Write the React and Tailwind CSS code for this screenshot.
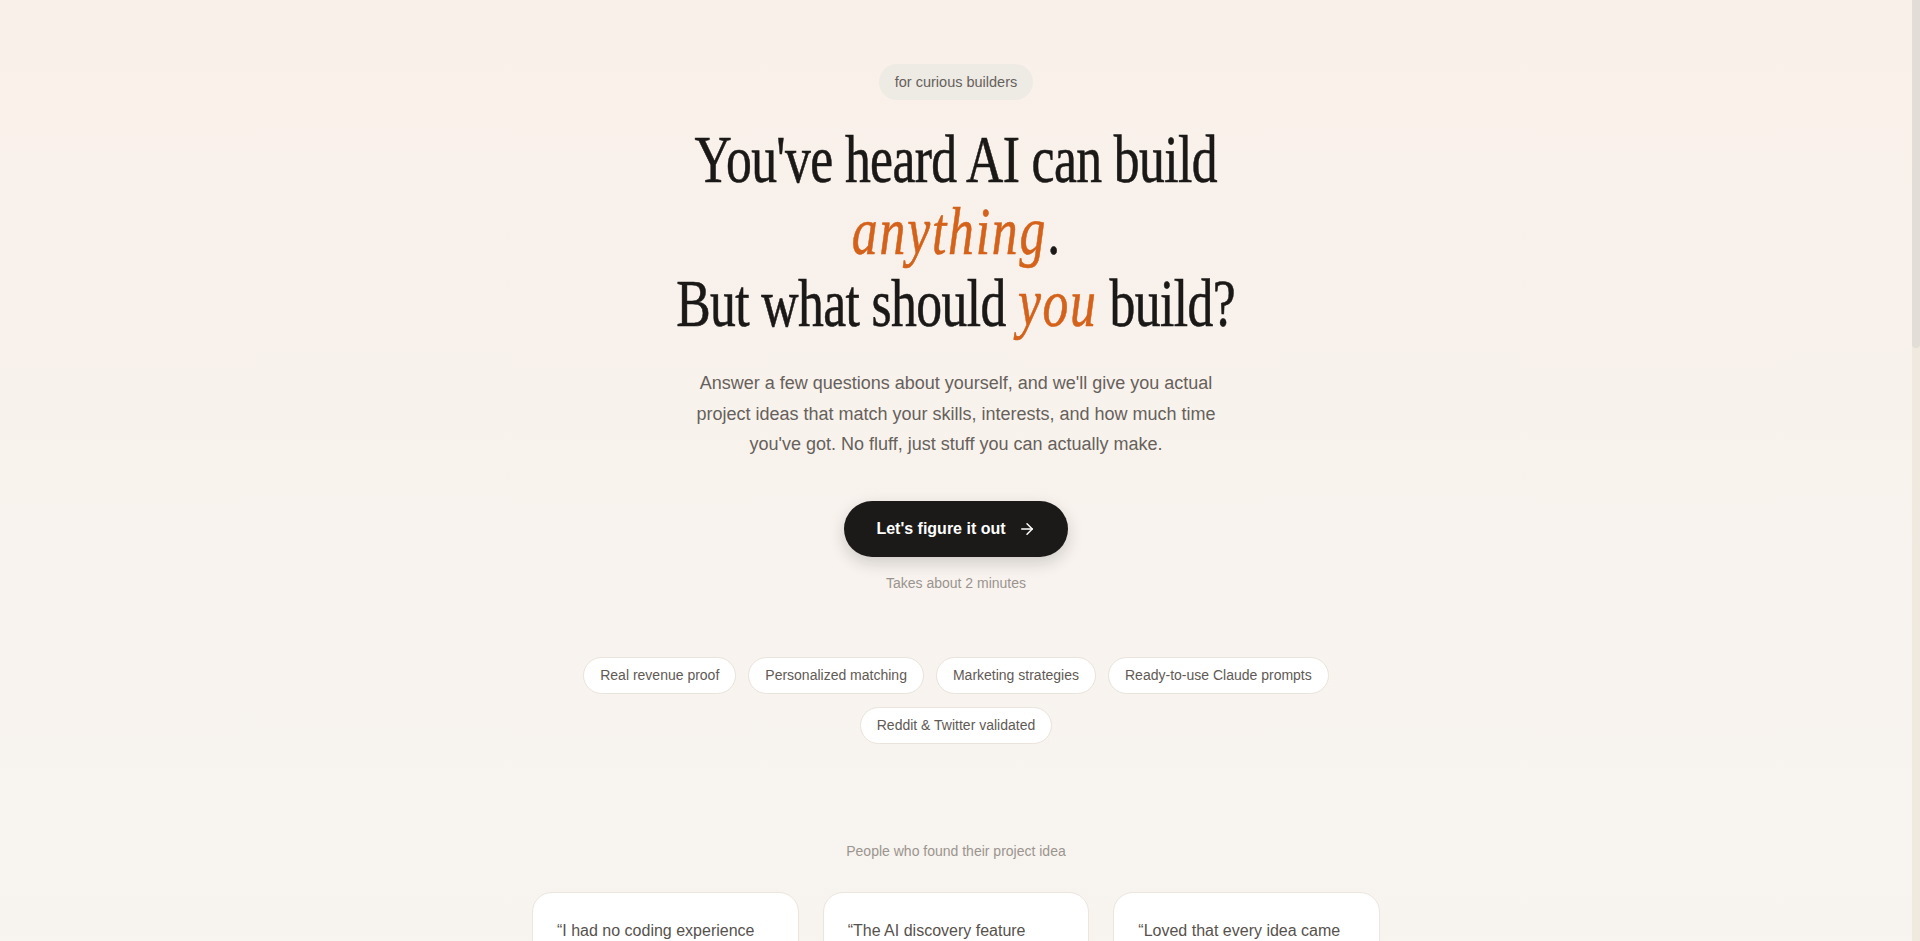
import React from 'react';
import { ArrowRight } from 'lucide-react';

const chips = [
  'Real revenue proof',
  'Personalized matching',
  'Marketing strategies',
  'Ready-to-use Claude prompts',
  'Reddit & Twitter validated',
];

const quotes = [
  {
    text: 'I had no coding experience and still shipped a tiny tool in a weekend. The idea fit exactly what I could do.',
    name: 'Maya R.',
    role: 'Designer',
  },
  {
    text: 'The AI discovery feature pointed me at a niche I never would have thought of. Three paying users in week one.',
    name: 'Daniel K.',
    role: 'Product manager',
  },
  {
    text: 'Loved that every idea came with proof people actually pay for it. No more guessing what to build next.',
    name: 'Priya S.',
    role: 'Backend engineer',
  },
];

const steps = [
  { n: '01', title: 'Tell us about you', body: 'Your skills, what you care about, and how many hours you can spare each week.' },
  { n: '02', title: 'Get matched ideas', body: 'We surface projects that real people are already asking for on Reddit and Twitter.' },
  { n: '03', title: 'Start building', body: 'Each idea ships with marketing angles and ready-to-use Claude prompts to get going.' },
];

const sans = "font-['Liberation_Sans',Arial,sans-serif]";
const serif = "font-['Liberation_Serif','Times_New_Roman',serif]";

export default function App() {
  return (
    <div className={`flex h-screen bg-[#f7f4ef] ${sans}`}>
      <div className="flex-1 overflow-y-auto [&::-webkit-scrollbar]:hidden [scrollbar-width:none]">
        {/* Hero */}
        <section className="bg-gradient-to-b from-[#f9f0e9] via-[#f8f3ee] to-[#f7f4ef] pt-16 flex flex-col items-center">
          <span className="rounded-full bg-[#eeeae4] px-4 py-2 text-[14.5px] leading-5 text-[#66615c]">
            for curious builders
          </span>

          <h1 className={`${serif} mt-[23px] scale-x-[0.76] text-center text-[68px] leading-[72px] tracking-[-0.012em] text-[#1b1917] whitespace-nowrap [-webkit-text-stroke:0.6px_currentColor]`}>
            You've heard AI can build
            <br />
            <em className="text-[#d4621a] tracking-[0.035em]">anything</em>.
            <br />
            But what should <em className="text-[#d4621a] tracking-[0.03em]">you</em> build?
          </h1>

          <p className="mt-[29px] max-w-[540px] text-center text-[18px] leading-[30.6px] text-[#66615b]">
            Answer a few questions about yourself, and we'll give you actual project ideas that match your skills, interests, and how much time you've got. No fluff, just stuff you can actually make.
          </p>

          <button className="mt-[41px] flex items-center gap-3 rounded-full bg-[#1c1a19] px-8 py-4 text-base leading-6 font-bold text-white shadow-[0_6px_16px_rgba(28,26,25,0.18)]">
            Let's figure it out
            <ArrowRight size={18} strokeWidth={2} />
          </button>
          <p className="mt-4 text-[14px] leading-5 text-[#9a948e]">Takes about 2 minutes</p>

          <div className="mt-16 flex max-w-3xl flex-wrap justify-center gap-x-3 gap-y-[13px]">
            {chips.map((c) => (
              <span
                key={c}
                className="rounded-full border border-[#e9e3db] bg-white px-4 py-2 text-[14px] leading-[19px] text-[#5f5a55]"
              >
                {c}
              </span>
            ))}
          </div>

          <p className="mt-[97px] text-[14px] leading-5 text-[#9b958f]">People who found their project idea</p>

          <div className="mt-[31px] grid w-full max-w-4xl grid-cols-3 gap-6 px-6">
            {quotes.map((q) => (
              <div key={q.name} className="rounded-[20px] border border-[#ebe5dd] bg-white p-6 flex flex-col gap-5">
                <p className="text-base leading-7 text-[#57524d]">{'\u201C' + q.text + '\u201D'}</p>
                <div className="flex items-center gap-3">
                  <div className="flex h-9 w-9 items-center justify-center rounded-full bg-[#f3e6dc] text-sm font-bold text-[#d4621a]">
                    {q.name[0]}
                  </div>
                  <div className="flex flex-col">
                    <span className="text-sm font-bold text-[#1c1a19]">{q.name}</span>
                    <span className="text-xs text-[#9a948e]">{q.role}</span>
                  </div>
                </div>
              </div>
            ))}
          </div>
        </section>

        {/* How it works */}
        <section className="mt-40 flex flex-col items-center px-6">
          <span className="text-[14px] text-[#9b958f]">How it works</span>
          <h2 className={`${serif} mt-4 text-[48px] leading-[56px] text-[#1b1917]`}>
            Three steps to your <em className="text-[#d4621a]">next</em> project
          </h2>
          <div className="mt-14 grid w-full max-w-4xl grid-cols-3 gap-6">
            {steps.map((s) => (
              <div key={s.n} className="rounded-[20px] border border-[#ebe5dd] bg-white p-8">
                <span className={`${serif} text-[32px] text-[#d4621a]`}>{s.n}</span>
                <h3 className="mt-4 text-lg font-bold text-[#1c1a19]">{s.title}</h3>
                <p className="mt-2 text-[15px] leading-6 text-[#66615b]">{s.body}</p>
              </div>
            ))}
          </div>
        </section>

        {/* Final CTA */}
        <section className="mt-40 flex flex-col items-center px-6">
          <h2 className={`${serif} text-center text-[56px] leading-[64px] text-[#1b1917]`}>
            Stop scrolling. <em className="text-[#d4621a]">Start</em> building.
          </h2>
          <p className="mt-6 max-w-[480px] text-center text-[18px] leading-[30px] text-[#66615b]">
            Two minutes of questions, a short list of ideas that actually fit you.
          </p>
          <button className="mt-10 flex items-center gap-3 rounded-full bg-[#1c1a19] px-8 py-4 text-base leading-6 font-bold text-white">
            Let's figure it out
            <ArrowRight size={18} strokeWidth={2} />
          </button>
        </section>

        <footer className="mt-40 border-t border-[#ebe5dd] py-10 pb-[300px] text-center text-[13px] text-[#a39d96]">
          Made for curious builders
        </footer>
      </div>

      {/* scrollbar */}
      <div className="flex w-2 flex-col bg-[#efe9df]">
        <div className="h-[348px] rounded-b-sm bg-[#e2ddd6]" />
      </div>
    </div>
  );
}
